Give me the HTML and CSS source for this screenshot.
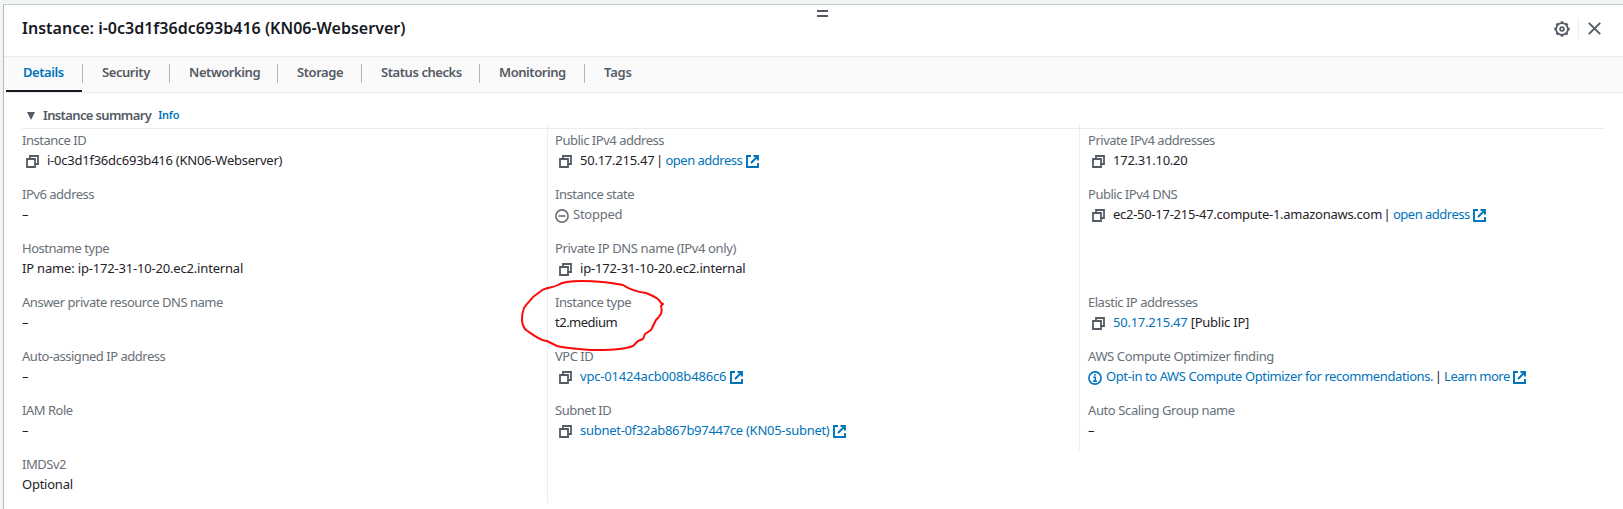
FILE: index.html
```html
<!DOCTYPE html>
<html lang="en">
<head>
<meta charset="utf-8">
<title>Instance details</title>
<link rel="stylesheet" href="styles.css">
</head>
<body>
<svg class="defs" width="0" height="0">
  <symbol id="copy" viewBox="0 0 13 13"><path d="M4 3.500V1h8v8H9.500M1 4h8v8H1z" fill="none" stroke="currentColor" stroke-width="1.800"/></symbol>
  <symbol id="ext" viewBox="0 0 13 13"><path d="M5 1H1v11h11V8M7.500 1H12v4.500M12 1L5 8" fill="none" stroke="currentColor" stroke-width="1.900"/></symbol>
</svg>
<div class="panel">
  <header class="header">
    <h1 class="title">Instance: i-0c3d1f36dc693b416 (KN06-Webserver)</h1>
    <div class="grip"></div>
    <div class="actions">
      <svg class="gear" viewBox="0 0 16 16"><circle cx="8" cy="8" r="5.900" fill="none" stroke="currentColor" stroke-width="1.700"/><circle cx="8" cy="8" r="6.900" pathLength="80" fill="none" stroke="currentColor" stroke-width="1.600" stroke-dasharray="5 5" stroke-dashoffset="2.500"/><circle cx="8" cy="8" r="1.900" fill="none" stroke="currentColor" stroke-width="1.700"/></svg>
      <span class="rule"></span>
      <svg class="close" viewBox="0 0 13 13"><path d="M.8.8l11.400 11.400M12.200.8L.8 12.200" stroke="currentColor" stroke-width="1.900"/></svg>
    </div>
  </header>
  <nav class="tabs">
    <a class="tab active">Details</a><a class="tab security">Security</a><a class="tab networking">Networking</a><a class="tab storage">Storage</a><a class="tab status">Status checks</a><a class="tab monitoring">Monitoring</a><a class="tab tags">Tags</a>
  </nav>
  <main class="content">
    <h2 class="summary"><span class="caret"></span>Instance summary<a class="info">Info</a></h2>
    <div class="columns">
      <dl class="column">
        <div class="field"><dt>Instance ID</dt><dd><svg class="copy"><use href="#copy"/></svg><span>i-0c3d1f36dc693b416 (KN06-Webserver)</span></dd></div>
        <div class="field"><dt>IPv6 address</dt><dd>–</dd></div>
        <div class="field"><dt>Hostname type</dt><dd class="host">IP name: ip-172-31-10-20.ec2.internal</dd></div>
        <div class="field"><dt>Answer private resource DNS name</dt><dd>–</dd></div>
        <div class="field"><dt>Auto-assigned IP address</dt><dd>–</dd></div>
        <div class="field"><dt>IAM Role</dt><dd>–</dd></div>
        <div class="field"><dt>IMDSv2</dt><dd>Optional</dd></div>
      </dl>
      <dl class="column middle">
        <div class="field"><dt>Public IPv4 address</dt><dd><svg class="copy"><use href="#copy"/></svg><span>50.17.215.47<span class="sep">|</span><a class="words">open address</a></span><svg class="ext"><use href="#ext"/></svg></dd></div>
        <div class="field"><dt>Instance state</dt><dd class="stopped"><svg class="round" viewBox="0 0 14 14"><circle cx="7" cy="7" r="6.100" fill="none" stroke="currentColor" stroke-width="1.600"/><path d="M3.500 7h7" stroke="currentColor" stroke-width="1.600"/></svg><span>Stopped</span></dd></div>
        <div class="field"><dt class="wide">Private IP DNS name (IPv4 only)</dt><dd class="host"><svg class="copy"><use href="#copy"/></svg><span>ip-172-31-10-20.ec2.internal</span></dd></div>
        <div class="field"><dt>Instance type</dt><dd class="words">t2.medium</dd></div>
        <div class="field"><dt>VPC ID</dt><dd class="host"><svg class="copy"><use href="#copy"/></svg><a>vpc-01424acb008b486c6</a><svg class="ext tight"><use href="#ext"/></svg></dd></div>
        <div class="field"><dt>Subnet ID</dt><dd><svg class="copy"><use href="#copy"/></svg><a class="subnet">subnet-0f32ab867b97447ce (KN05-subnet)</a><svg class="ext"><use href="#ext"/></svg></dd></div>
      </dl>
      <dl class="column middle last">
        <div class="field"><dt>Private IPv4 addresses</dt><dd><svg class="copy"><use href="#copy"/></svg><span>172.31.10.20</span></dd></div>
        <div class="field"><dt>Public IPv4 DNS</dt><dd><svg class="copy"><use href="#copy"/></svg><span><span class="dns">ec2-50-17-215-47.compute-1.amazonaws.com</span><span class="sep">|</span><a class="words">open address</a></span><svg class="ext tight"><use href="#ext"/></svg></dd></div>
        <div class="field"></div>
        <div class="field"><dt>Elastic IP addresses</dt><dd><svg class="copy"><use href="#copy"/></svg><span><a>50.17.215.47</a> [Public IP]</span></dd></div>
        <div class="field"><dt class="wide">AWS Compute Optimizer finding</dt><dd><svg class="round blue" viewBox="0 0 14 14"><circle cx="7" cy="7" r="6.100" fill="none" stroke="currentColor" stroke-width="1.600"/><path d="M7 3v1.800M5.300 6.300h1.900v4M5 10.300h4" fill="none" stroke="currentColor" stroke-width="1.500"/></svg><span><a class="sentence">Opt-in to AWS Compute Optimizer for recommendations.</a><span class="sep">|</span><a class="words">Learn more</a></span><svg class="ext tight"><use href="#ext"/></svg></dd></div>
        <div class="field"><dt class="wide">Auto Scaling Group name</dt><dd>–</dd></div>
      </dl>
    </div>
  </main>
</div>
<svg class="marker" viewBox="520 278 145 76"><path d="M558 285C562 282 570 281 582 281C597 281 613 283 623 285C629 289 638 292 646 293C654 296 660 300 661 303L663 304L661 306C663 312 661 315 656 320L652 328L651 330L645 334L643 339L638 341L633 346C622 350 607 350 591 350C577 349 564 348 557 346L547 341C540 341 532 334 526 330C521 325 521 316 524 308C527 303 531 300 533 297L541 291C545 287 553 288 558 285Z" fill="none" stroke="#fb0a0a" stroke-width="2" stroke-linejoin="round"/></svg>
</body>
</html>
```
FILE: styles.css
```css
* { box-sizing: border-box; }
body { margin: 0; height: 509px; padding: 4px 0 0 3px; overflow: hidden; background: #f2f3f3; color: #1f2229; font: 13px/20px "Noto Sans", sans-serif; }
h1, h2, dl, dd { margin: 0; }
a { color: #0073bb; }
.defs { position: absolute; }
.panel { height: 505px; background: #fff; border-top: 1px solid #c3cccc; border-left: 1px solid #b5b9b9; }
.header { position: relative; display: flex; justify-content: space-between; height: 52px; border-bottom: 1px solid #eaeded; }
.title { padding: 11px 0 0 18px; color: #16191f; font-size: 16px; line-height: 25px; font-weight: 600; letter-spacing: .01px; }
.grip { position: absolute; left: 813px; top: 5px; width: 11px; height: 7px; border: solid #545b64; border-width: 2px 0; }
.actions { display: flex; align-items: center; height: 47px; padding-right: 22px; color: #545b64; }
.gear { width: 16px; height: 16px; }
.rule { width: 1px; height: 21px; margin: 0 9px 0 8px; background: #eaeded; }
.close { width: 13px; height: 13px; }
.tabs { display: flex; height: 36px; padding: 7px 0 0 2px; background: #fafafa; border-bottom: 1px solid #eaeded; }
.tab { position: relative; height: 19px; padding-left: 19px; color: #545b64; font-weight: 600; line-height: 17px; letter-spacing: -.43px; white-space: nowrap; border-right: 1px solid #aab7b8; }
.active { width: 77px; padding-left: 17px; color: #0073bb; }
.active::after { content: ""; position: absolute; left: 0; right: 0; top: 26px; height: 2px; background: #16191f; }
.security { width: 87px; }
.networking { width: 108px; }
.storage { width: 84px; }
.status { width: 118px; }
.monitoring { width: 105px; }
.tags { border: 0; letter-spacing: -.2px; }
.content { padding: 12px 18px 0 18px; }
.summary { display: flex; align-items: center; height: 24px; border-bottom: 1px solid #eaeded; padding: 0 0 3px 5px; color: #545b64; font-size: 13px; font-weight: 600; letter-spacing: -.63px; }
.caret { margin: 2px 8px 0 0; border: solid transparent; border-width: 8px 4.500px 0; border-top-color: #545b64; }
.info { margin-left: 7px; font-size: 11px; letter-spacing: -.2px; }
.columns { display: flex; align-items: flex-start; margin-top: -4px; }
.column { width: 525px; padding-top: 5px; }
.middle { width: 532px; height: 378px; padding-left: 7px; border-left: 1px solid #eaeded; }
.last { width: 526px; height: 325px; padding-left: 8px; }
.field { height: 54px; white-space: nowrap; }
dt { color: #687078; line-height: 20px; letter-spacing: -.48px; }
.wide { letter-spacing: -.39px; }
dd { display: flex; align-items: center; height: 20px; letter-spacing: -.24px; }
.host { letter-spacing: -.18px; }
.subnet { letter-spacing: -.28px; }
.dns { letter-spacing: -.27px; }
.words { letter-spacing: -.5px; }
.sentence { letter-spacing: -.4px; }
.sep { margin: 0 2.500px 0 1.500px; }
.copy { width: 13px; height: 13px; margin: 3px 8px 0 4px; color: #545b64; }
.ext { width: 13px; height: 13px; margin: 3px 0 0 4px; color: #0073bb; }
.tight { margin-left: 3.500px; }
.round { width: 14px; height: 14px; margin: 3px 4px 0 0; }
.stopped { color: #687078; }
.blue { color: #0073bb; }
.marker { position: absolute; left: 520px; top: 278px; width: 145px; height: 76px; }
```
